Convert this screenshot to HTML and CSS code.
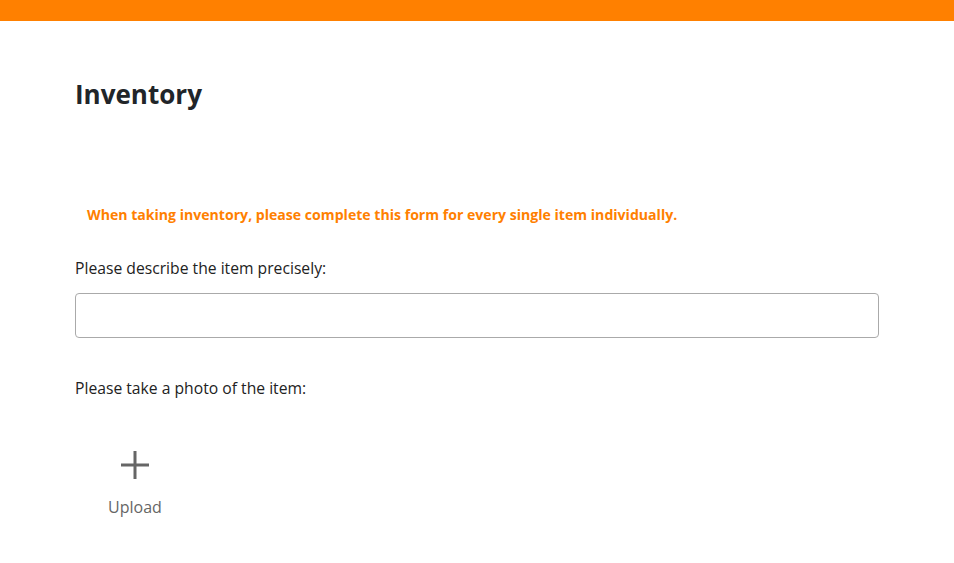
FILE: index.html
```html
<!DOCTYPE html>
<html lang="en">
<head>
<meta charset="utf-8">
<title>Inventory</title>
<link rel="stylesheet" href="styles.css">
</head>
<body>
<div class="topbar"></div>
<main class="page">
  <h1 class="title">Inventory</h1>
  <p class="notice">When taking inventory, please complete this form for every single item individually.</p>
  <div class="field">
    <label class="label" for="desc">Please describe the item precisely:</label>
    <input class="input" id="desc" type="text">
  </div>
  <div class="field photo">
    <span class="label">Please take a photo of the item:</span>
    <button class="upload" type="button">
      <svg class="plus" width="28" height="28" viewBox="0 0 28 28" aria-hidden="true">
        <rect x="12.5" y="0" width="3" height="28" fill="#666"/>
        <rect x="0" y="12.5" width="28" height="3" fill="#666"/>
      </svg>
      <span class="upload-text">Upload</span>
    </button>
  </div>
</main>
</body>
</html>
```
FILE: styles.css
```css
* { box-sizing: border-box; }
html, body { margin: 0; padding: 0; background: #fff; }
body {
  font-family: "Open Sans", "Noto Sans", sans-serif;
  color: #222;
}
.topbar {
  height: 21px;
  background: #ff8000;
}
.page {
  padding: 0 75px;
}
.title {
  margin: 0;
  padding-top: 55px;
  font-size: 26px;
  font-weight: 700;
  line-height: 36px;
  color: #212529;
}
.notice {
  margin: 93px 0 0 0;
  padding-left: 12px;
  font-size: 14.1px;
  font-weight: 700;
  line-height: 20px;
  color: #ff8000;
}
.field {
  display: flex;
  flex-direction: column;
}
.label {
  display: block;
  margin-top: 32px;
  font-size: 15.7px;
  line-height: 22px;
  color: #222;
}
.input {
  margin-top: 14px;
  width: 100%;
  height: 45px;
  border: 1px solid #aaa;
  border-radius: 4px;
  font: inherit;
  padding: 0 12px;
}
.photo .label {
  margin-top: 39px;
}
.upload {
  align-self: flex-start;
  margin-top: 52px;
  margin-left: 26px;
  width: 68px;
  display: flex;
  flex-direction: column;
  align-items: center;
  background: none;
  border: none;
  padding: 0;
  font: inherit;
  cursor: pointer;
}
.plus { display: block; }
.upload-text {
  margin-top: 17px;
  font-size: 16px;
  line-height: 22px;
  color: #666;
}
```
